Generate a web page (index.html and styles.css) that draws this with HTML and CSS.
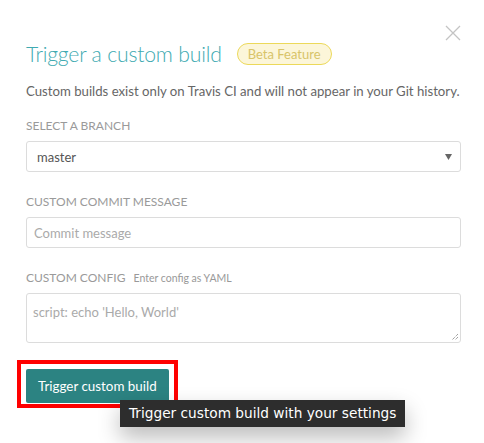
FILE: index.html
```html
<!DOCTYPE html>
<html>
<head>
<meta charset="utf-8">
<link rel="stylesheet" href="styles.css">
</head>
<body>
<div class="modal">
  <button class="close" aria-label="Close">
    <svg width="16" height="16" viewBox="0 0 16 16"><path d="M1 1L15 15M15 1L1 15" stroke="#c4c4c4" stroke-width="1.3" fill="none"/></svg>
  </button>
  <div class="header">
    <h1 class="title">Trigger a custom build</h1>
    <span class="badge">Beta Feature</span>
  </div>
  <p class="desc">Custom builds exist only on Travis CI and will not appear in your Git history.</p>

  <div class="field first">
    <div class="label">SELECT A BRANCH</div>
    <div class="select">
      <span class="select-value">master</span>
      <svg class="caret" width="7" height="6" viewBox="0 0 7 6"><path d="M0 0H7L3.5 6Z" fill="#666"/></svg>
    </div>
  </div>

  <div class="field">
    <div class="label">CUSTOM COMMIT MESSAGE</div>
    <div class="input"><span class="placeholder">Commit message</span></div>
  </div>

  <div class="field">
    <div class="label">CUSTOM CONFIG <span class="hint">Enter config as YAML</span></div>
    <div class="textarea">
      <span class="placeholder">script: echo 'Hello, World'</span>
      <svg class="grip" width="8" height="8" viewBox="0 0 8 8"><path d="M7 1L1 7M7 4L4 7" stroke="#777" stroke-width="1" stroke-dasharray="1 1" fill="none"/></svg>
    </div>
  </div>

  <div class="actions">
    <div class="highlight">
      <button class="btn">Trigger custom build</button>
    </div>
    <div class="tooltip">Trigger custom build with your settings</div>
  </div>
</div>
</body>
</html>
```
FILE: styles.css
```css
* { box-sizing: border-box; }
body {
  margin: 0;
  background: #fff;
  font-family: Lato, "Open Sans", sans-serif;
}
.modal {
  position: relative;
  width: 484px;
  height: 443px;
  padding: 39px 23px 0 26px;
  overflow: hidden;
}
.close {
  position: absolute;
  top: 25px;
  left: 445px;
  border: 0;
  background: none;
  padding: 0;
  width: 16px;
  height: 16px;
}
.header {
  display: flex;
  align-items: center;
  gap: 15px;
  height: 30px;
}
.title {
  margin: 0;
  font-weight: 300;
  font-size: 21.2px;
  letter-spacing: -0.2px;
  color: #40aab1;
}
.badge {
  display: inline-block;
  height: 22px;
  line-height: 20px;
  padding: 0 10px;
  border: 1px solid #ecd95a;
  border-radius: 11px;
  background: #fcf6d9;
  color: #d8c469;
  font-size: 13px;
}
.desc {
  margin: 13px 0 0;
  font-size: 13.2px;
  color: #666;
  line-height: 18px;
}
.field { margin-top: 22px; }
.field.first { margin-top: 18px; }
.label {
  font-size: 12px;
  color: #9a9a9a;
  line-height: 16px;
  margin-bottom: 7px;
}
.hint {
  font-size: 10.5px;
  margin-left: 5px;
  color: #999;
}
.select, .input {
  height: 31px;
  border: 1px solid #dcdcdc;
  border-radius: 3px;
  display: flex;
  align-items: center;
  font-size: 13px;
}
.select { padding: 0 8px 0 10px; justify-content: space-between; color: #555; }
.input { padding: 0 7px; }
.placeholder { color: #aaa; font-size: 13px; }
.textarea {
  position: relative;
  height: 50px;
  border: 1px solid #dcdcdc;
  border-radius: 3px;
  padding: 7px 6px;
}
.grip { position: absolute; right: 1px; bottom: 1px; }
.actions {
  position: relative;
  margin-top: 17px;
  margin-left: -9px;
}
.highlight {
  display: inline-block;
  border: 4px solid #ff0000;
  padding: 5px 5px 1px 5px;
}
.btn {
  display: block;
  height: 34px;
  padding: 0 12px;
  border: 0;
  border-radius: 2px;
  background: #2c8382;
  color: #fff;
  font-family: Lato, "Open Sans", sans-serif;
  font-size: 13.4px;
}
.tooltip {
  position: absolute;
  left: 103px;
  top: 40px;
  height: 27px;
  padding: 0 9px;
  background: #2d2d2d;
  color: #fff;
  font-family: "DejaVu Sans", sans-serif;
  font-size: 13.7px;
  line-height: 27px;
  white-space: nowrap;
  box-shadow: 0 10px 22px rgba(0,0,0,0.28);
}
```
